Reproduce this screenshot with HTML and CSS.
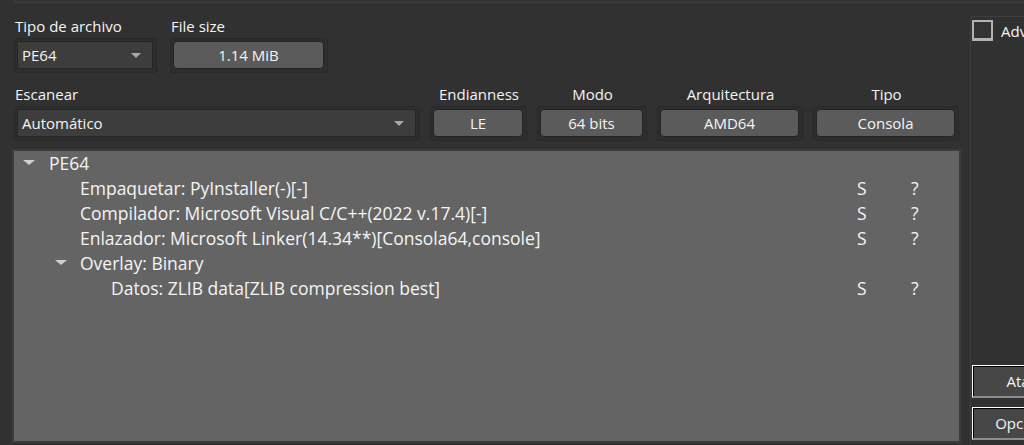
FILE: index.html
```html
<!DOCTYPE html>
<html lang="es">
<head>
<meta charset="utf-8">
<title>Detect It Easy</title>
<link rel="stylesheet" href="styles.css">
</head>
<body>
<div class="app">
  <div class="left">
    <div class="topframe"></div>
    <div class="row row1">
      <div class="field">
        <div class="label">Tipo de archivo</div>
        <div class="frame w-type"><div class="combo"><span>PE64</span><i class="caret"></i></div></div>
      </div>
      <div class="field">
        <div class="label">File size</div>
        <div class="frame w-size"><div class="btn">1.14 MiB</div></div>
      </div>
    </div>
    <div class="row row2">
      <div class="field">
        <div class="label">Escanear</div>
        <div class="frame w-scan"><div class="combo"><span>Automático</span><i class="caret"></i></div></div>
      </div>
      <div class="field center">
        <div class="label">Endianness</div>
        <div class="frame w-end"><div class="btn">LE</div></div>
      </div>
      <div class="field center">
        <div class="label">Modo</div>
        <div class="frame w-mode"><div class="btn">64 bits</div></div>
      </div>
      <div class="field center">
        <div class="label">Arquitectura</div>
        <div class="frame w-arch"><div class="btn">AMD64</div></div>
      </div>
      <div class="field center">
        <div class="label">Tipo</div>
        <div class="frame w-tipo"><div class="btn">Consola</div></div>
      </div>
    </div>
    <div class="tree">
      <div class="node l0"><i class="arrow"></i><span class="name">PE64</span></div>
      <div class="node l1"><span class="name">Empaquetar: PyInstaller(-)[-]</span><span class="s">S</span><span class="q">?</span></div>
      <div class="node l1"><span class="name">Compilador: Microsoft Visual C/C++(2022 v.17.4)[-]</span><span class="s">S</span><span class="q">?</span></div>
      <div class="node l1"><span class="name">Enlazador: Microsoft Linker(14.34**)[Consola64,console]</span><span class="s">S</span><span class="q">?</span></div>
      <div class="node l1"><i class="arrow"></i><span class="name">Overlay: Binary</span></div>
      <div class="node l2"><span class="name">Datos: ZLIB data[ZLIB compression best]</span><span class="s">S</span><span class="q">?</span></div>
    </div>
  </div>
  <div class="right">
    <div class="group">
      <div class="check"><span class="box"></span><span class="ctext">Advanced</span></div>
      <div class="spacer"></div>
      <div class="rbtn">Atajos</div>
      <div class="rbtn">Opciones</div>
    </div>
  </div>
</div>
</body>
</html>
```

FILE: styles.css
```css
html, body {
  margin: 0;
  padding: 0;
}
body {
  width: 1024px;
  height: 445px;
  overflow: hidden;
  background: #313131;
  color: #f4f4f4;
  font-family: "Open Sans", "Noto Sans", sans-serif;
}
.app {
  display: flex;
  width: 1200px;
  height: 445px;
}
.left {
  width: 962px;
  flex: none;
  display: flex;
  flex-direction: column;
  padding-left: 12px;
  box-sizing: border-box;
}
.topframe {
  margin-left: 2px;
  height: 2px;
  width: 1100px;
  border-left: 1px solid #404040;
  border-bottom: 1px solid #3e3e3e;
  background: #343434;
}
.row {
  display: flex;
  padding-left: 2px;
}
.row1 {
  margin-top: 13px;
  gap: 13px;
}
.row2 {
  margin-top: 11px;
  gap: 10px;
}
.field {
  display: flex;
  flex-direction: column;
}
.field.center .label {
  text-align: center;
}
.label {
  font-size: 15px;
  line-height: 20px;
  height: 20px;
  padding-left: 1px;
  margin-bottom: 2px;
  white-space: nowrap;
}
.frame {
  box-sizing: border-box;
  height: 35px;
  border: 1px solid #292929;
  border-radius: 3px;
  background: #2e2e2e;
  padding: 2px 3px 3px 2px;
}
.w-type { width: 143px; }
.w-size { width: 158px; }
.w-scan { width: 406px; }
.w-end { width: 97px; }
.w-mode { width: 110px; }
.w-arch { width: 146px; }
.w-tipo { width: 146px; }
.combo {
  box-sizing: border-box;
  height: 28px;
  border: 1px solid #252525;
  border-radius: 2px;
  background: #3d3d3d;
  display: flex;
  align-items: center;
  justify-content: space-between;
  padding: 0 11px 0 4px;
  font-size: 15px;
}
.caret {
  width: 0;
  height: 0;
  border-left: 5px solid transparent;
  border-right: 5px solid transparent;
  border-top: 5px solid #a8a8a8;
}
.btn {
  box-sizing: border-box;
  height: 28px;
  border: 1px solid #232323;
  border-radius: 4px;
  background: #5b5b5b;
  display: flex;
  align-items: center;
  justify-content: center;
  font-size: 15px;
}
.tree {
  margin-top: 8px;
  box-sizing: border-box;
  width: 949px;
  flex: 1;
  margin-bottom: 2px;
  border: 2px solid #3c3c3c;
  background: #646464;
  padding-top: 0;
  position: relative;
}
.node {
  position: relative;
  height: 25px;
  line-height: 25px;
  font-size: 17.5px;
  white-space: nowrap;
}
.node .name {
  position: absolute;
  top: 0;
}
.l0 .name { left: 35px; }
.l1 .name { left: 66px; }
.l2 .name { left: 97px; }
.arrow {
  position: absolute;
  top: 9px;
  width: 0;
  height: 0;
  border-left: 6px solid transparent;
  border-right: 6px solid transparent;
  border-top: 5px solid #cfcfcf;
}
.l0 .arrow { left: 9px; }
.l1 .arrow { left: 41px; }
.s {
  position: absolute;
  left: 843px;
  top: 0;
}
.q {
  position: absolute;
  left: 897px;
  top: 0;
}
.right {
  width: 200px;
  flex: none;
  padding-top: 16px;
  padding-left: 8px;
  box-sizing: border-box;
  display: flex;
  flex-direction: column;
}
.group {
  flex: 1;
  border: 1px solid #3e3e3e;
  border-right: none;
  border-bottom: none;
  border-radius: 4px 0 0 0;
  display: flex;
  flex-direction: column;
  padding: 3px 0 5px 1px;
}
.check {
  display: flex;
  align-items: center;
  gap: 8px;
}
.box {
  box-sizing: border-box;
  width: 21px;
  height: 21px;
  border: 2px solid #b3b3b3;
  border-bottom-width: 3px;
  background: #333333;
}
.ctext {
  font-size: 15px;
}
.spacer {
  flex: 1;
}
.rbtn {
  box-sizing: border-box;
  width: 112px;
  height: 33px;
  border: 1px solid #ffffff;
  border-bottom: 2px solid #8c8c8c;
  box-shadow: inset 1px 1px 0 #000;
  background: #474747;
  display: flex;
  align-items: center;
  justify-content: center;
  font-size: 15px;
  margin-bottom: 9px;
}
.rbtn:last-child {
  margin-bottom: 0;
}
```
